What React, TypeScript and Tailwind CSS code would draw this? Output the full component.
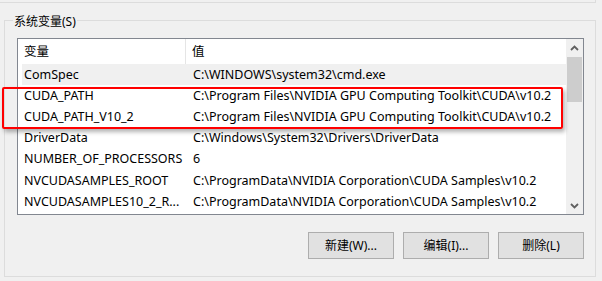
import React from 'react'

const font = { fontFamily: '"Noto Sans", "Noto Sans CJK SC", sans-serif' }

const rows: [string, string][] = [
  ['ComSpec', 'C:\\WINDOWS\\system32\\cmd.exe'],
  ['CUDA_PATH', 'C:\\Program Files\\NVIDIA GPU Computing Toolkit\\CUDA\\v10.2'],
  ['CUDA_PATH_V10_2', 'C:\\Program Files\\NVIDIA GPU Computing Toolkit\\CUDA\\v10.2'],
  ['DriverData', 'C:\\Windows\\System32\\Drivers\\DriverData'],
  ['NUMBER_OF_PROCESSORS', '6'],
  ['NVCUDASAMPLES_ROOT', 'C:\\ProgramData\\NVIDIA Corporation\\CUDA Samples\\v10.2'],
  ['NVCUDASAMPLES10_2_R...', 'C:\\ProgramData\\NVIDIA Corporation\\CUDA Samples\\v10.2'],
]

function Chevron({ down }: { down?: boolean }) {
  return (
    <svg width="9" height="6" viewBox="0 0 9 6" className={down ? 'rotate-180' : ''}>
      <path d="M1 5 L4.5 1.5 L8 5" fill="none" stroke="#606060" strokeWidth="1.8" />
    </svg>
  )
}

function Button({ label }: { label: string }) {
  return (
    <button className="w-[86px] h-[27px] bg-[#e1e1e1] border border-[#adadad] text-[12px] text-black flex items-center justify-center">
      {label}
    </button>
  )
}

export default function App() {
  return (
    <div className="w-[602px] h-[281px] bg-[#f0f0f0] relative overflow-hidden text-black" style={font}>
      <div className="w-[596px] h-[3px] border-b border-r border-[#dcdcdc]" />

      <div className="relative ml-[4px] mt-[17px] w-[592px] h-[257px] border border-[#dcdcdc] pl-[12px] pr-[11px] pt-[17px] flex flex-col">
        <span className="absolute left-[8px] top-[-7px] px-[1px] bg-[#f0f0f0] text-[12px] leading-[16px]">
          系统变量(S)
        </span>

        <div className="h-[177px] border border-[#828790] bg-white flex">
          <div className="flex-1 flex flex-col text-[12.5px]">
            <div className="h-[25px] flex items-center">
              <div className="w-[168px] h-full pl-[6px] pt-[1px] flex items-center border-r border-[#e5e5e5]">变量</div>
              <div className="pl-[6px] pt-[1px]">值</div>
            </div>
            {rows.map(([name, value], i) => (
              <div key={name} className="h-[21.2px] flex items-center pl-[4px]">
                <div className={`flex-1 h-full pt-[1px] flex items-center ${i === 0 ? 'bg-[#f0f0f0]' : ''}`}>
                  <div className="w-[165px] pl-[2px] whitespace-nowrap">{name}</div>
                  <div className="pl-[6px] whitespace-nowrap">{value}</div>
                </div>
              </div>
            ))}
          </div>

          <div className="w-[17px] bg-[#f0f0f0] flex flex-col items-center">
            <div className="h-[17px] w-full flex items-center justify-center">
              <Chevron />
            </div>
            <div className="mt-[1px] h-[45px] w-[15px] bg-[#cdcdcd]" />
            <div className="flex-1" />
            <div className="h-[17px] w-full flex items-center justify-center">
              <Chevron down />
            </div>
          </div>
        </div>

        <div className="mt-[17px] flex justify-end gap-[9px]">
          <Button label="新建(W)..." />
          <Button label="编辑(I)..." />
          <Button label="删除(L)" />
        </div>
      </div>

      <div className="absolute left-[2px] top-[87px] w-[561px] h-[42px] border-2 border-[#ff0000] rounded-[2px] shadow-[2px_3px_4px_rgba(0,0,0,0.3)] pointer-events-none" />
    </div>
  )
}
